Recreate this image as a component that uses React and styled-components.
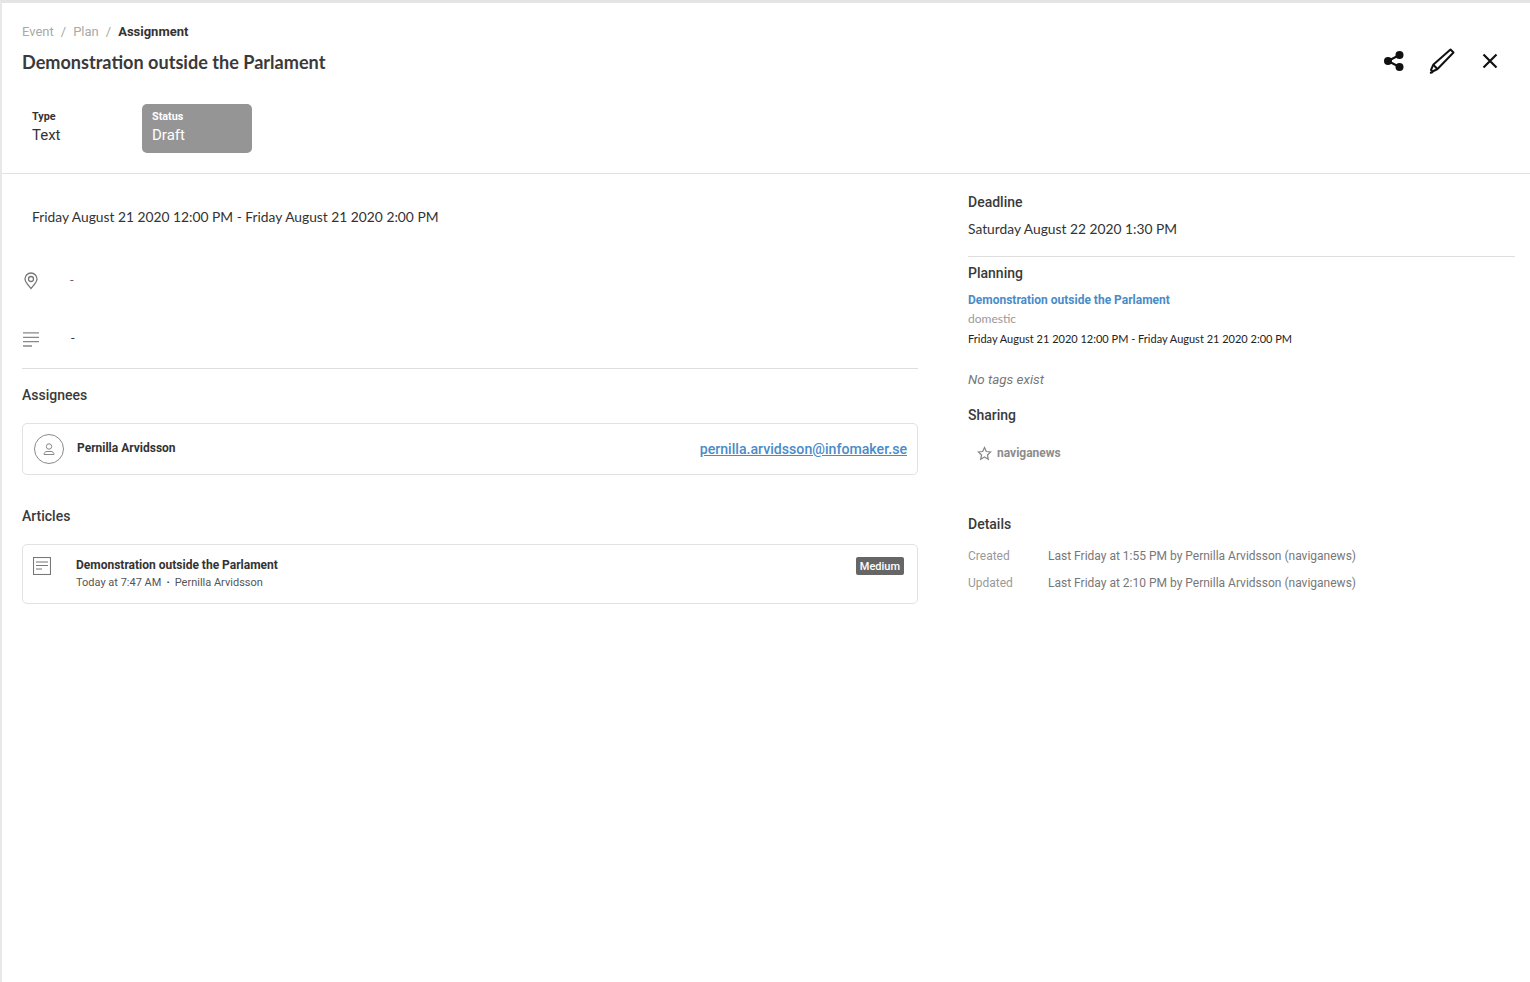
import styled, { createGlobalStyle } from "styled-components";

const Global = createGlobalStyle`
  html, body { margin: 0; padding: 0; background: #fff; }
  body { font-family: Roboto, "Liberation Sans", sans-serif; color: #333; }
`;

const Page = styled.div`
  width: 1530px;
  height: 982px;
  box-sizing: border-box;
  border-top: 3px solid #e4e4e4;
  border-left: 2px solid #e8e8e8;
  overflow: hidden;
`;

const Header = styled.header`
  height: 171px;
  box-sizing: border-box;
  border-bottom: 1px solid #e2e2e2;
  padding: 20px 0 0 20px;
`;

const HeaderTop = styled.div`
  display: flex;
  justify-content: space-between;
  height: 81px;
`;

const Crumbs = styled.div`
  display: flex;
  align-items: center;
  height: 17px;
  font-size: 13px;
  color: #a8a8a8;
`;

const Sep = styled.span`
  margin: 0 7px;
`;

const CrumbCurrent = styled.span`
  color: #333;
  font-weight: 700;
`;

const Title = styled.h1`
  margin: 9px 0 0;
  font-family: Lato, sans-serif;
  font-size: 18.100px;
  line-height: 26px;
  font-weight: 700;
  color: #3a3a3a;
`;

const Actions = styled.div`
  display: flex;
  align-items: center;
  height: 36px;
  margin-top: 20px;
  padding-right: 28px;
  gap: 23.500px;
`;

const ActionIcon = styled.svg`
  display: block;
  color: #111;
`;

const Meta = styled.div`
  display: flex;
`;

const MetaBox = styled.div`
  width: ${(p) => (p.$wide ? "110px" : "120px")};
  height: 49px;
  box-sizing: border-box;
  padding: 6px 10px;
  border-radius: 5px;
  background: ${(p) => (p.$filled ? "#959595" : "transparent")};
  color: ${(p) => (p.$filled ? "#fff" : "#333")};
`;

const MetaLabel = styled.div`
  font-size: 10.800px;
  line-height: 13px;
  font-weight: 700;
`;

const MetaValue = styled.div`
  font-size: 15px;
  line-height: 24px;
`;

const Body = styled.div`
  display: flex;
`;

const Left = styled.section`
  width: 896px;
  margin-left: 20px;
`;

const Right = styled.aside`
  width: 547px;
  margin-left: 50px;
  padding-top: 19px;
`;

const DateLine = styled.div`
  padding: 33px 0 0 10px;
  font-family: Lato, sans-serif;
  font-size: 13.800px;
  line-height: 20px;
  color: #333;
`;

const InfoRow = styled.div`
  display: flex;
  align-items: center;
  height: 24px;
  margin-top: ${(p) => p.$mt}px;
`;

const InfoIcon = styled.svg`
  display: block;
  width: 18px;
  flex: none;
`;

const Dash = styled.span`
  margin-left: ${(p) => (p.$dark ? "31px" : "30px")};
  padding-bottom: 2px;
  font-size: 13px;
  color: ${(p) => (p.$dark ? "#333" : "#666")};
`;

const Divider = styled.hr`
  margin: ${(p) => p.$margin || "0"};
  border: 0;
  border-top: 1px solid #dedede;
`;

const Heading = styled.h2`
  margin: ${(p) => p.$mt || 0}px 0 0;
  font-size: 14px;
  line-height: 18px;
  font-weight: 500;
  color: #3a3a3a;
`;

const Card = styled.div`
  display: flex;
  align-items: ${(p) => (p.$top ? "flex-start" : "center")};
  height: ${(p) => p.$h}px;
  box-sizing: border-box;
  margin-top: 19px;
  padding: 0 10px 0 11px;
  border: 1px solid #e2e2e2;
  border-radius: 5px;
`;

const Avatar = styled.div`
  display: flex;
  align-items: center;
  justify-content: center;
  width: 28px;
  height: 28px;
  border: 1px solid #8a8a8a;
  border-radius: 50%;
  flex: none;
`;

const PersonName = styled.div`
  margin-left: 13px;
  font-size: 12px;
  font-weight: 700;
  color: #333;
  padding-bottom: 2px;
`;

const Mail = styled.a`
  margin-left: auto;
  font-size: 14.150px;
  font-weight: 500;
  color: #4a8bc9;
  text-decoration: underline;
`;

const ArticleIcon = styled.svg`
  margin: 12px 0 0 -1px;
  flex: none;
`;

const ArticleInfo = styled.div`
  margin-left: 25px;
  padding-top: 12px;
`;

const ArticleTitle = styled.div`
  font-size: 12px;
  line-height: 16px;
  font-weight: 700;
  color: #333;
`;

const ArticleSub = styled.div`
  margin-top: 2px;
  font-size: 11px;
  line-height: 15px;
  color: #555;
`;

const SubDot = styled.span`
  margin: 0 5px;
  font-weight: 700;
  color: #333;
`;

const Badge = styled.span`
  margin: 12px 3px 0 auto;
  padding: 0 4px;
  height: 18px;
  line-height: 19px;
  border-radius: 2px;
  background: #666;
  color: #fff;
  font-size: 11px;
  font-weight: 500;
`;

const DeadlineValue = styled.div`
  margin-top: 9px;
  font-family: Lato, sans-serif;
  font-size: 13.800px;
  line-height: 18px;
  color: #333;
`;

const PlanLink = styled.a`
  display: block;
  margin-top: 10px;
  font-size: 12px;
  line-height: 16px;
  font-weight: 700;
  color: #4a8bc9;
`;

const PlanTag = styled.div`
  margin-top: 3px;
  font-family: Lato, sans-serif;
  font-size: 12px;
  line-height: 15px;
  color: #999;
`;

const PlanDate = styled.div`
  margin-top: 5px;
  font-family: Lato, sans-serif;
  font-size: 11px;
  line-height: 15px;
  color: #222;
`;

const NoTags = styled.div`
  margin-top: 26px;
  font-size: 13.400px;
  line-height: 16px;
  font-style: italic;
  color: #777;
`;

const ShareRow = styled.div`
  display: flex;
  align-items: center;
  gap: 5px;
  margin: 20px 0 0 9px;
  height: 18px;
  font-size: 12px;
  font-weight: 700;
  color: #8c8c8c;
`;

const DetailRow = styled.div`
  display: flex;
  margin-top: ${(p) => p.$mt}px;
  font-size: 12px;
  line-height: 16px;
  color: #777;
`;

const DetailLabel = styled.span`
  width: 80px;
  color: #999;
`;

const App = () => (
  <>
    <Global />
    <Page>
      <Header>
        <HeaderTop>
          <div>
            <Crumbs>
              Event<Sep>/</Sep>Plan<Sep>/</Sep>
              <CrumbCurrent>Assignment</CrumbCurrent>
            </Crumbs>
            <Title>Demonstration outside the Parlament</Title>
          </div>
          <Actions>
            <ActionIcon width="22" height="22" viewBox="0 0 22 22" fill="currentColor">
              <circle cx="5" cy="11" r="4" />
              <circle cx="16.5" cy="5" r="4" />
              <circle cx="16.5" cy="17" r="4" />
              <path d="M5 11L16.5 5M5 11l11.5 6" stroke="currentColor" strokeWidth="2" />
            </ActionIcon>
            <ActionIcon width="26" height="26" viewBox="0 0 26 26" fill="none" stroke="currentColor" strokeWidth="2" strokeLinejoin="round">
              <path d="M21.5 1.5l3 3L8.5 21l-5 2.5-1.5-1.500 2.200-5.200z" />
              <path d="M4.200 16.800l4.300 4.200" />
              <path d="M1 25l3-1" />
            </ActionIcon>
            <ActionIcon width="24" height="24" viewBox="0 0 24 24" fill="none" stroke="currentColor" strokeWidth="2.200">
              <path d="M5.500 5.500l13 13M18.500 5.500l-13 13" />
            </ActionIcon>
          </Actions>
        </HeaderTop>
        <Meta>
          <MetaBox>
            <MetaLabel>Type</MetaLabel>
            <MetaValue>Text</MetaValue>
          </MetaBox>
          <MetaBox $wide $filled>
            <MetaLabel>Status</MetaLabel>
            <MetaValue>Draft</MetaValue>
          </MetaBox>
        </Meta>
      </Header>
      <Body>
        <Left>
          <DateLine>Friday August 21 2020 12:00 PM - Friday August 21 2020 2:00 PM</DateLine>
          <InfoRow $mt={41}>
            <InfoIcon height="20" viewBox="0 0 18 20" fill="none" stroke="#777" strokeWidth="1.300">
              <path d="M9 18.500C6 15 3 12 3 9a6 6 0 0 1 12 0c0 3-3 6-6 9.500z" />
              <circle cx="9" cy="9" r="2.500" />
            </InfoIcon>
            <Dash>-</Dash>
          </InfoRow>
          <InfoRow $mt={34}>
            <InfoIcon height="18" viewBox="0 0 18 18" fill="none" stroke="#888" strokeWidth="1.300">
              <path d="M1 3.900h16M1 8.300h16M1 12.700h16M1 17h9" />
            </InfoIcon>
            <Dash $dark>-</Dash>
          </InfoRow>
          <Divider $margin="18px 0 17px" />
          <Heading>Assignees</Heading>
          <Card $h={52}>
            <Avatar>
              <svg width="14" height="14" viewBox="0 0 14 14" fill="none" stroke="#888" strokeWidth="1">
                <circle cx="7" cy="4.500" r="2.700" />
                <path d="M2 12.500c0-2 1.500-3 3-3h4c1.500 0 3 1 3 3z" />
              </svg>
            </Avatar>
            <PersonName>Pernilla Arvidsson</PersonName>
            <Mail>pernilla.arvidsson@infomaker.se</Mail>
          </Card>
          <Heading $mt={32}>Articles</Heading>
          <Card $h={60} $top>
            <ArticleIcon width="18" height="18" viewBox="0 0 18 18" fill="none" stroke="#777" strokeWidth="1.100">
              <rect x="0.500" y="0.500" width="17" height="17" />
              <path d="M3 5h12M3 8.500h12M3 12h6" />
            </ArticleIcon>
            <ArticleInfo>
              <ArticleTitle>Demonstration outside the Parlament</ArticleTitle>
              <ArticleSub>Today at 7:47 AM<SubDot>·</SubDot>Pernilla Arvidsson</ArticleSub>
            </ArticleInfo>
            <Badge>Medium</Badge>
          </Card>
        </Left>
        <Right>
          <Heading>Deadline</Heading>
          <DeadlineValue>Saturday August 22 2020 1:30 PM</DeadlineValue>
          <Divider $margin="18px 0 7px" />
          <Heading>Planning</Heading>
          <PlanLink>Demonstration outside the Parlament</PlanLink>
          <PlanTag>domestic</PlanTag>
          <PlanDate>Friday August 21 2020 12:00 PM - Friday August 21 2020 2:00 PM</PlanDate>
          <NoTags>No tags exist</NoTags>
          <Heading $mt={18}>Sharing</Heading>
          <ShareRow>
            <svg width="15" height="15" viewBox="0 0 24 24" fill="none" stroke="#888" strokeWidth="2">
              <path d="M12 2.500l2.900 6.300 6.800.8-5 4.700 1.300 6.800-6-3.400-6 3.400 1.300-6.800-5-4.700 6.800-.8z" />
            </svg>
            naviganews
          </ShareRow>
          <Heading $mt={53}>Details</Heading>
          <DetailRow $mt={15}>
            <DetailLabel>Created</DetailLabel>
            Last Friday at 1:55 PM by Pernilla Arvidsson (naviganews)
          </DetailRow>
          <DetailRow $mt={11}>
            <DetailLabel>Updated</DetailLabel>
            Last Friday at 2:10 PM by Pernilla Arvidsson (naviganews)
          </DetailRow>
        </Right>
      </Body>
    </Page>
  </>
);

export default App;
